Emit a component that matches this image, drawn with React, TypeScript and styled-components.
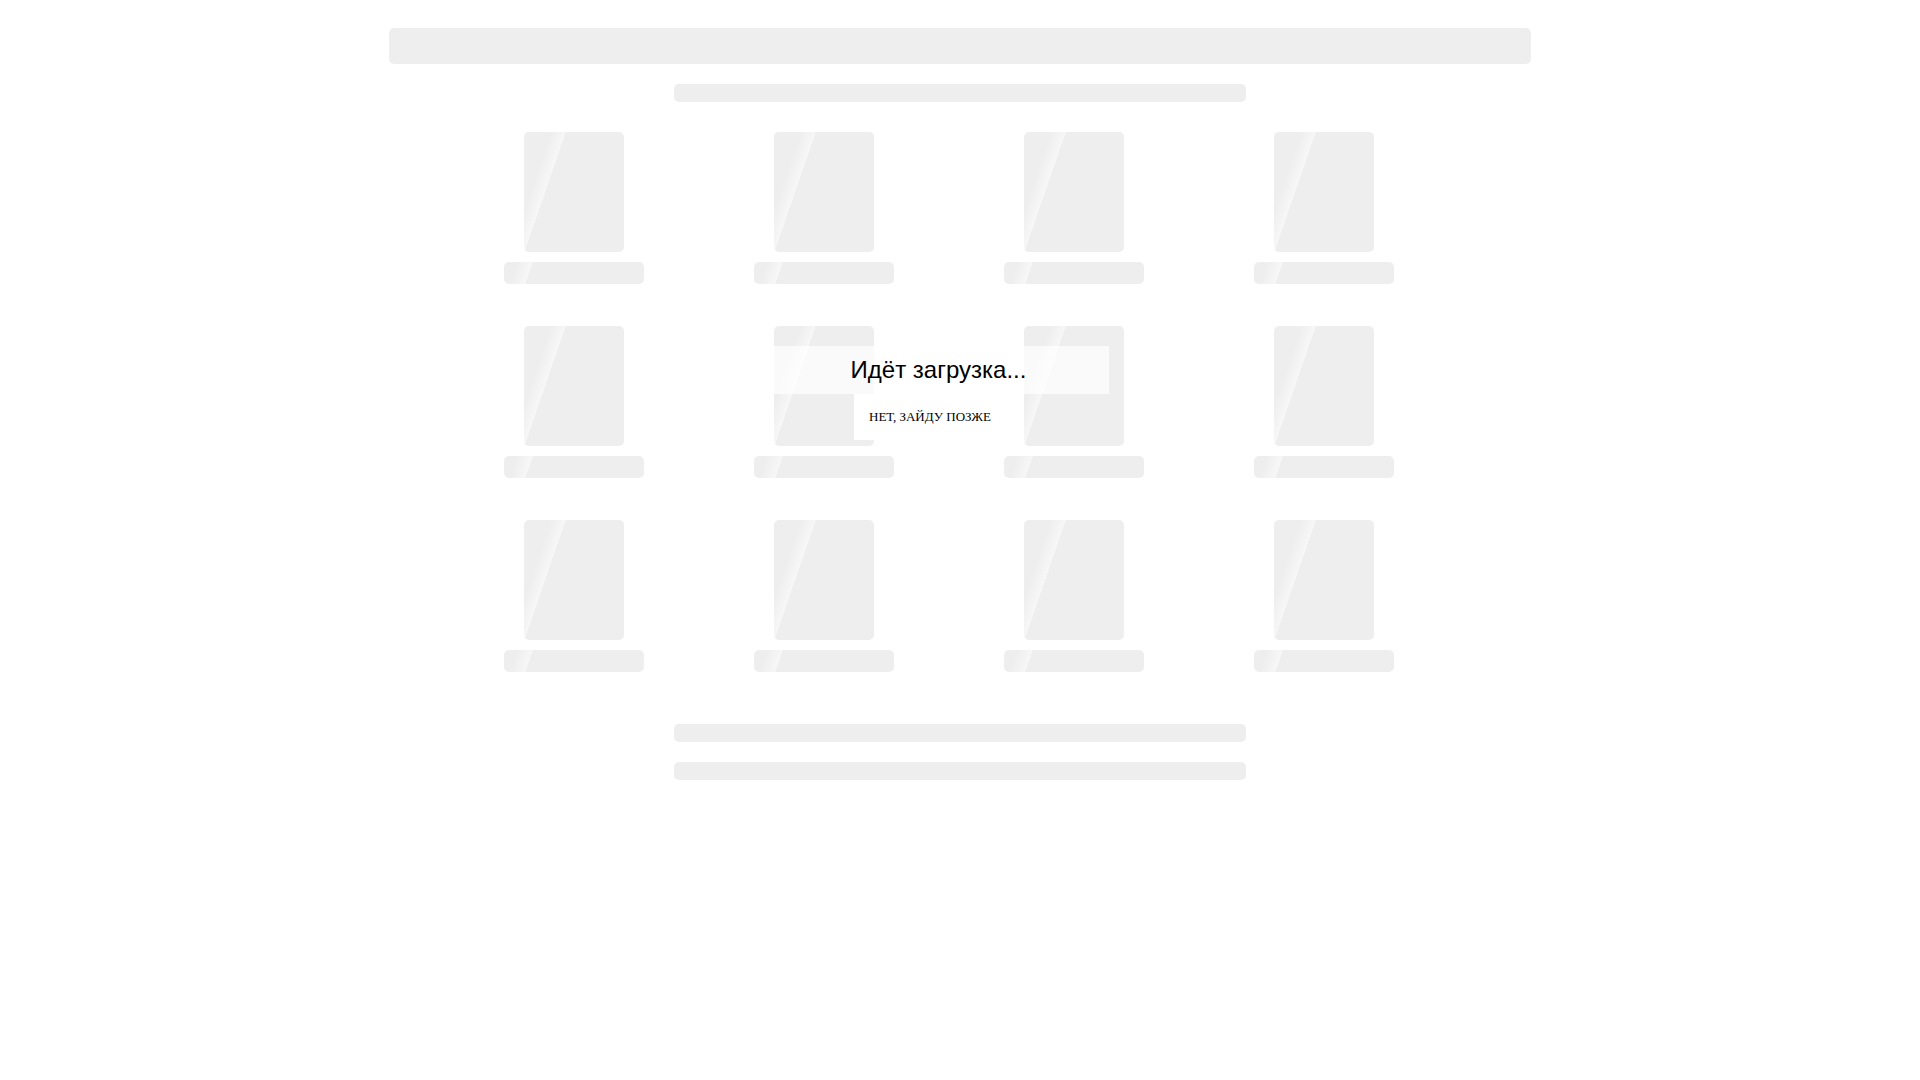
import React from "react";
import styled, { createGlobalStyle } from "styled-components";

const Global = createGlobalStyle`
  html, body { margin: 0; padding: 0; background: #ffffff; }
  body { font-family: "Liberation Sans", Arial, sans-serif; }
`;

const Page = styled.div`
  position: relative;
  width: 1920px;
  min-height: 1080px;
  padding-top: 28px;
  box-sizing: border-box;
`;

const Container = styled.div`
  width: 1142px;
  margin: 0 auto;
  display: flex;
  flex-direction: column;
`;

const Bar = styled.div<{ $w: number; $h: number; $mt: number }>`
  width: ${(p) => p.$w}px;
  height: ${(p) => p.$h}px;
  margin: ${(p) => p.$mt}px auto 0;
  background: #eeeeee;
  border-radius: 5px;
`;

const Grid = styled.div`
  margin-top: 30px;
  margin-left: 60px;
  display: grid;
  grid-template-columns: repeat(4, 250px);
  row-gap: 42px;
`;

const Card = styled.div`
  display: flex;
  flex-direction: column;
  align-items: center;
`;

const Thumb = styled.div`
  width: 100px;
  height: 120px;
  border-radius: 5px;
  background: linear-gradient(
    109deg,
    #eeeeee 0%,
    #eeeeee 19%,
    #f7f7f7 29.5%,
    #eeeeee 29.6%,
    #eeeeee 100%
  );
`;

const Caption = styled.div`
  width: 140px;
  height: 22px;
  margin-top: 10px;
  border-radius: 5px;
  background: linear-gradient(
    109deg,
    #eeeeee 0%,
    #eeeeee 9%,
    #f7f7f7 19.5%,
    #eeeeee 19.6%,
    #eeeeee 100%
  );
`;

const Overlay = styled.div`
  position: absolute;
  left: 774px;
  top: 346px;
  display: flex;
  flex-direction: column;
  align-items: flex-start;
`;

const Title = styled.div`
  width: 335px;
  height: 48px;
  box-sizing: border-box;
  padding-right: 6px;
  background: rgba(255, 255, 255, 0.72);
  font-family: "Liberation Sans", Arial, sans-serif;
  font-size: 24px;
  line-height: 48px;
  color: #000000;
  text-align: center;
`;

const Later = styled.div`
  margin-left: 80px;
  height: 46px;
  padding: 0 15px;
  background: #ffffff;
  font-family: "Liberation Serif", "Times New Roman", serif;
  font-size: 13px;
  line-height: 46px;
  color: #000000;
  cursor: pointer;
`;

export default function App() {
  const cards = Array.from({ length: 12 }, (_, i) => i);
  return (
    <>
      <Global />
      <Page>
        <Container>
          <Bar $w={1142} $h={36} $mt={0} />
          <Bar $w={572} $h={18} $mt={20} />
          <Grid>
            {cards.map((i) => (
              <Card key={i}>
                <Thumb />
                <Caption />
              </Card>
            ))}
          </Grid>
          <Bar $w={572} $h={18} $mt={52} />
          <Bar $w={572} $h={18} $mt={20} />
        </Container>
        <Overlay>
          <Title>Идёт загрузка...</Title>
          <Later>НЕТ, ЗАЙДУ ПОЗЖЕ</Later>
        </Overlay>
      </Page>
    </>
  );
}
